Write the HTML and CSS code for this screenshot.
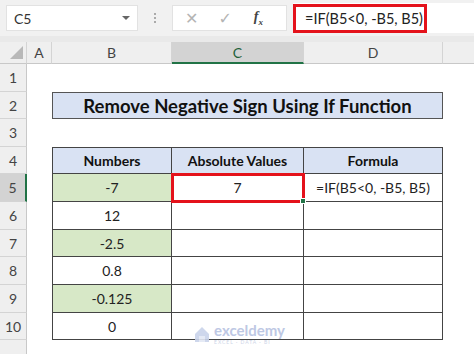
FILE: index.html
```html
<!DOCTYPE html>
<html lang="en">
<head>
    <meta charset="UTF-8">
    <title>Remove Negative Sign Using If Function</title>
    <link rel="stylesheet" href="styles.css">
</head>
<body>
    <div class="topbar">
        <div class="namebox">
            <span>C5</span>
            <span class="drop"></span>
        </div>
        <div class="dots"><i></i><i></i><i></i></div>
        <div class="fxbox">
            <span class="icon">&#x2715;</span>
            <span class="icon">&#x2713;</span>
            <span class="fx">f<sub>x</sub></span>
        </div>
        <div class="formula">
            <span class="formula-text">=IF(B5&lt;0, -B5, B5)</span>
        </div>
    </div>
    <div class="gap"></div>

    <div class="sheet">
        <!-- column headers -->
        <div class="ch corner"><span class="tri"></span></div>
        <div class="ch">A</div>
        <div class="ch">B</div>
        <div class="ch sel">C</div>
        <div class="ch">D</div>
        <div class="ch last"></div>

        <!-- row 1 -->
        <div class="rh">1</div>
        <div></div><div></div><div></div><div></div><div></div>

        <!-- row 2 -->
        <div class="rh">2</div>
        <div></div>
        <div class="title">Remove Negative Sign Using If Function</div>
        <div></div>

        <!-- row 3 -->
        <div class="rh">3</div>
        <div></div><div></div><div></div><div></div><div></div>

        <!-- row 4 -->
        <div class="rh">4</div>
        <div></div>
        <div class="t head first top">Numbers</div>
        <div class="t head top">Absolute Values</div>
        <div class="t head top">Formula</div>
        <div></div>

        <!-- row 5 -->
        <div class="rh sel">5</div>
        <div></div>
        <div class="t first green">-7</div>
        <div class="t active">7<span class="handle"></span></div>
        <div class="t">=IF(B5&lt;0, -B5, B5)</div>
        <div></div>

        <!-- row 6 -->
        <div class="rh">6</div>
        <div></div>
        <div class="t first">12</div>
        <div class="t"></div>
        <div class="t"></div>
        <div></div>

        <!-- row 7 -->
        <div class="rh">7</div>
        <div></div>
        <div class="t first green">-2.5</div>
        <div class="t"></div>
        <div class="t"></div>
        <div></div>

        <!-- row 8 -->
        <div class="rh">8</div>
        <div></div>
        <div class="t first">0.8</div>
        <div class="t"></div>
        <div class="t"></div>
        <div></div>

        <!-- row 9 -->
        <div class="rh">9</div>
        <div></div>
        <div class="t first green">-0.125</div>
        <div class="t"></div>
        <div class="t"></div>
        <div></div>

        <!-- row 10 -->
        <div class="rh">10</div>
        <div></div>
        <div class="t first">0</div>
        <div class="t"></div>
        <div class="t"></div>
        <div></div>

        <!-- row 11 -->
        <div class="rh"></div>
        <div></div><div></div><div></div><div></div><div></div>

        <div class="watermark">
            <svg width="18" height="18" viewBox="0 0 18 18">
                <path d="M2 9 L9 2 L16 9 L16 17 L2 17 Z" fill="#c9d3ea"/>
                <path d="M6 17 L6 11 L12 11 L12 17" fill="#e3e8f4"/>
            </svg>
            <div class="wm-text">
                <span class="wm-name">exceldemy</span>
                <span class="wm-sub">EXCEL · DATA · BI</span>
            </div>
        </div>
    </div>
</body>
</html>
```

FILE: styles.css
```css
body {
    margin: 0;
    padding: 0;
    font-family: Lato, "Open Sans", sans-serif;
    background: #ffffff;
    color: #222;
    width: 474px;
    height: 354px;
    overflow: hidden;
}
.topbar {
    display: flex;
    align-items: center;
    height: 36px;
    background: #f1f1f1;
    padding-left: 6px;
    box-sizing: border-box;
}
.namebox {
    width: 132px;
    height: 26px;
    background: #fff;
    border: 1px solid #e2e2e2;
    box-sizing: border-box;
    display: flex;
    align-items: center;
    justify-content: space-between;
    padding: 0 7px 0 7px;
    font-size: 14px;
    color: #333;
}
.drop {
    width: 0;
    height: 0;
    border-left: 4px solid transparent;
    border-right: 4px solid transparent;
    border-top: 4px solid #666;
}
.dots {
    width: 34px;
    display: flex;
    flex-direction: column;
    align-items: center;
    gap: 2px;
}
.dots i {
    width: 2px;
    height: 2px;
    background: #aaa;
    display: block;
}
.fxbox {
    width: 115px;
    height: 26px;
    background: #fff;
    border: 1px solid #e2e2e2;
    box-sizing: border-box;
    display: flex;
    align-items: center;
    padding-left: 12px;
    gap: 20px;
}
.icon {
    color: #b4b4b4;
    font-size: 16px;
    font-family: "DejaVu Sans", sans-serif;
}
.fx {
    font-family: "Liberation Serif", serif;
    font-style: italic;
    font-weight: bold;
    font-size: 14px;
    color: #444;
    margin-left: 2px;
}
.fx sub {
    font-size: 9px;
}
.formula {
    flex: 1;
    height: 30px;
    margin-left: 6px;
    background: #fff;
    display: flex;
    align-items: center;
}
.formula-text {
    width: 134px;
    height: 29px;
    box-sizing: border-box;
    border: 3px solid #e4121b;
    display: flex;
    align-items: center;
    padding-left: 9px;
    font-size: 14.5px;
    color: #222;
}
.gap {
    height: 6px;
    background: #e9e9e9;
}
.sheet {
    position: relative;
    display: grid;
    grid-template-columns: 27px 25px 120px 132px 139px 1fr;
    grid-template-rows: 22px 28px 27px 28px 27px 28px 28px 27px 28px 28px 27px 20px;
    font-size: 14px;
}
.ch {
    background: #efefef;
    border-right: 1px solid #d4d4d4;
    border-bottom: 1px solid #c8c8c8;
    box-sizing: border-box;
    display: flex;
    align-items: center;
    justify-content: center;
    color: #444;
    font-size: 14px;
}
.ch.sel {
    background: #d3d3d3;
    border-bottom: 2px solid #217346;
    color: #1d5f3a;
}
.ch.last {
    border-right: none;
}
.corner {
    justify-content: flex-end;
    align-items: flex-end;
    padding: 0 3px 4px 0;
}
.tri {
    width: 0;
    height: 0;
    border-left: 13px solid transparent;
    border-bottom: 13px solid #b8b8b8;
}
.rh {
    background: #efefef;
    border-right: 1px solid #c8c8c8;
    border-bottom: 1px solid #d4d4d4;
    box-sizing: border-box;
    display: flex;
    align-items: center;
    justify-content: center;
    color: #444;
    font-size: 14px;
}
.rh.sel {
    background: #d3d3d3;
    border-right: 2px solid #217346;
}
.title {
    grid-column: span 3;
    background: #d9e2f3;
    border: 1px solid #555;
    box-sizing: border-box;
    display: flex;
    align-items: center;
    justify-content: center;
    font-weight: bold;
    font-size: 18.5px;
    color: #111;
}
.t {
    border-right: 1px solid #444;
    border-bottom: 1px solid #444;
    box-sizing: border-box;
    display: flex;
    align-items: center;
    justify-content: center;
    color: #222;
    position: relative;
}
.t.first {
    border-left: 1px solid #444;
}
.t.top {
    border-top: 1px solid #444;
}
.t.head {
    background: #d9e2f3;
    font-weight: bold;
    color: #111;
}
.t.green {
    background: #d7e8c7;
}
.t.active {
    outline: 3px solid #e4121b;
    outline-offset: -2px;
    z-index: 1;
}
.handle {
    position: absolute;
    right: -3px;
    bottom: -3px;
    width: 4px;
    height: 4px;
    background: #217346;
    border: 1px solid #fff;
}
.watermark {
    position: absolute;
    left: 193px;
    top: 281px;
    display: flex;
    align-items: center;
    gap: 3px;
    opacity: 0.9;
}
.wm-text {
    display: flex;
    flex-direction: column;
    line-height: 1;
}
.wm-name {
    color: #b7c3e2;
    font-size: 15px;
    font-weight: bold;
}
.wm-sub {
    color: #c9d1e6;
    font-size: 5px;
    letter-spacing: 1px;
    margin-top: 2px;
}
```
